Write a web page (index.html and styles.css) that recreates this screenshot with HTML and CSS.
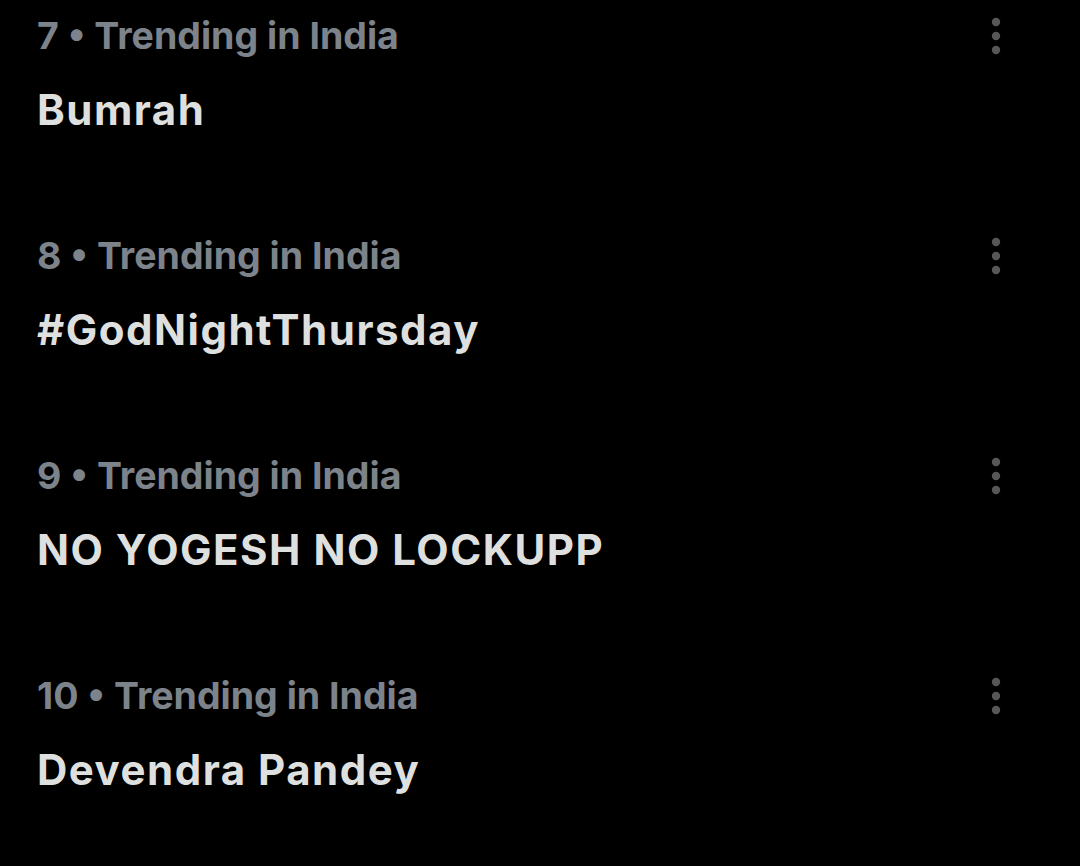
FILE: index.html
```html
<!DOCTYPE html>
<html lang="en">
<head>
  <meta charset="UTF-8">
  <meta name="viewport" content="width=device-width, initial-scale=1.0">
  <title>Trending in India</title>
  <link rel="stylesheet" href="styles.css">
</head>
<body>
  <main class="trends">
    <div class="trend">
      <div class="trend-text">
        <div class="trend-meta">7 • Trending in India</div>
        <div class="trend-name">Bumrah</div>
      </div>
      <svg class="more" viewBox="0 0 10 38" width="10" height="38"><circle cx="5" cy="5" r="4.2"/><circle cx="5" cy="19" r="4.2"/><circle cx="5" cy="33" r="4.2"/></svg>
    </div>
    <div class="trend">
      <div class="trend-text">
        <div class="trend-meta">8 • Trending in India</div>
        <div class="trend-name">#GodNightThursday</div>
      </div>
      <svg class="more" viewBox="0 0 10 38" width="10" height="38"><circle cx="5" cy="5" r="4.2"/><circle cx="5" cy="19" r="4.2"/><circle cx="5" cy="33" r="4.2"/></svg>
    </div>
    <div class="trend">
      <div class="trend-text">
        <div class="trend-meta">9 • Trending in India</div>
        <div class="trend-name">NO YOGESH NO LOCKUPP</div>
      </div>
      <svg class="more" viewBox="0 0 10 38" width="10" height="38"><circle cx="5" cy="5" r="4.2"/><circle cx="5" cy="19" r="4.2"/><circle cx="5" cy="33" r="4.2"/></svg>
    </div>
    <div class="trend">
      <div class="trend-text">
        <div class="trend-meta">10 • Trending in India</div>
        <div class="trend-name">Devendra Pandey</div>
      </div>
      <svg class="more" viewBox="0 0 10 38" width="10" height="38"><circle cx="5" cy="5" r="4.2"/><circle cx="5" cy="19" r="4.2"/><circle cx="5" cy="33" r="4.2"/></svg>
    </div>
  </main>
</body>
</html>
```

FILE: styles.css
```css
/* Page */
body {
  margin: 0;
  background-color: #000;
  font-family: Inter, "Noto Sans", sans-serif;
  font-weight: 700;
}

.trends {
  padding-top: 12px;
}

/* One trend row */
.trend {
  display: flex;
  justify-content: space-between;
  align-items: flex-start;
  height: 220px;
  padding: 0 79px 0 37px;
}

.trend-meta {
  font-size: 37.5px;
  line-height: 48px;
  color: #7d838a;
}

.trend-name {
  margin-top: 25px;
  font-size: 42px;
  line-height: 50px;
  letter-spacing: 1.5px;
  color: #dedfdf;
}

/* Three-dot menu */
.more {
  margin-top: 5px;
  fill: #575757;
}
```
